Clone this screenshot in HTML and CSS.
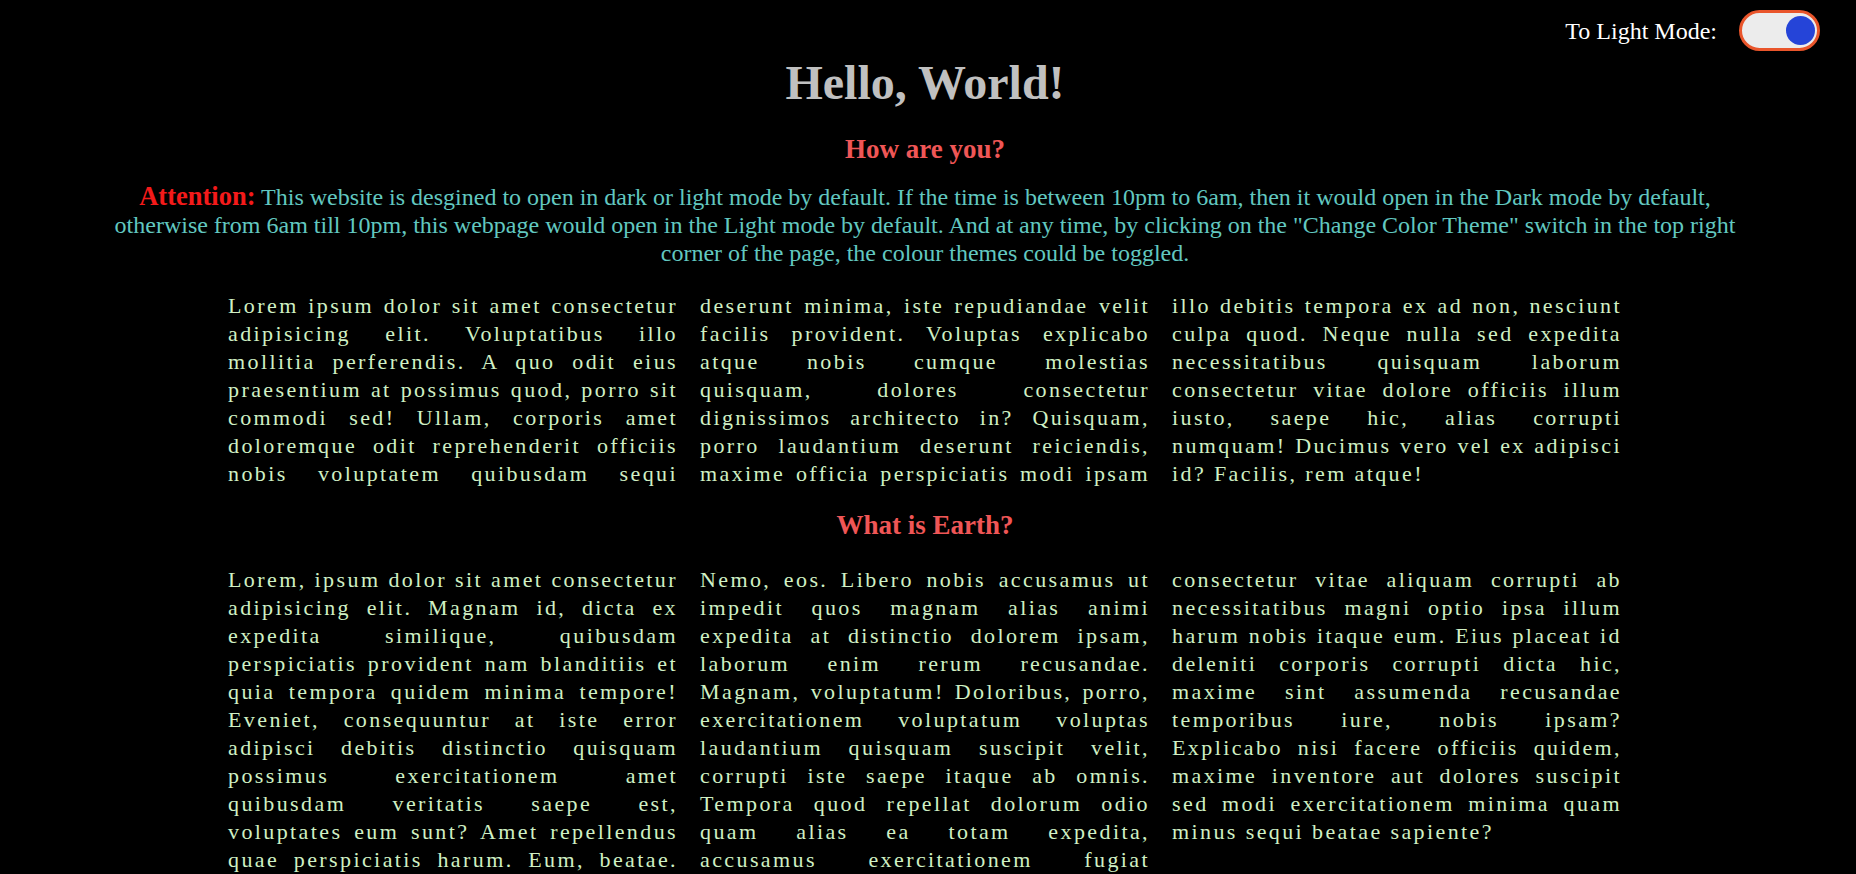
FILE: index.html
```html
<!DOCTYPE html>
<html lang="en">
<head>
<meta charset="utf-8">
<title>Hello, World!</title>
<link rel="stylesheet" href="styles.css">
</head>
<body>
<div class="page">
  <header class="topbar">
    <span class="toggle-label">To Light Mode:</span>
    <span class="switch" role="switch" aria-checked="true"><span class="knob"></span></span>
  </header>
  <h1 class="title">Hello, World!</h1>
  <h2 class="heading">How are you?</h2>
  <p class="notice"><span class="attn">Attention:</span> This website is desgined to open in dark or light mode by default. If the time is between 10pm to 6am, then it would open in the Dark mode by default, otherwise from 6am till 10pm, this webpage would open in the Light mode by default. And at any time, by clicking on the "Change Color Theme" switch in the top right corner of the page, the colour themes could be toggled.</p>
  <section class="cols">
    <p class="col cont">Lorem ipsum dolor sit amet consectetur adipisicing elit. Voluptatibus illo mollitia perferendis. A quo odit eius praesentium at possimus quod, porro sit commodi sed! Ullam, corporis amet doloremque odit reprehenderit officiis nobis voluptatem quibusdam sequi</p>
    <p class="col cont">deserunt minima, iste repudiandae velit facilis provident. Voluptas explicabo atque nobis cumque molestias quisquam, dolores consectetur dignissimos architecto in? Quisquam, porro laudantium deserunt reiciendis, maxime officia perspiciatis modi ipsam</p>
    <p class="col">illo debitis tempora ex ad non, nesciunt culpa quod. Neque nulla sed expedita necessitatibus quisquam laborum consectetur vitae dolore officiis illum iusto, saepe hic, alias corrupti numquam! Ducimus vero vel ex adipisci id? Facilis, rem atque!</p>
  </section>
  <h2 class="heading heading-earth">What is Earth?</h2>
  <section class="cols cols-earth">
    <p class="col cont">Lorem, ipsum dolor sit amet consectetur adipisicing elit. Magnam id, dicta ex expedita similique, quibusdam perspiciatis provident nam blanditiis et quia tempora quidem minima tempore! Eveniet, consequuntur at iste error adipisci debitis distinctio quisquam possimus exercitationem amet quibusdam veritatis saepe est, voluptates eum sunt? Amet repellendus quae perspiciatis harum. Eum, beatae.</p>
    <p class="col cont">Nemo, eos. Libero nobis accusamus ut impedit quos magnam alias animi expedita at distinctio dolorem ipsam, laborum enim rerum recusandae. Magnam, voluptatum! Doloribus, porro, exercitationem voluptatum voluptas laudantium quisquam suscipit velit, corrupti iste saepe itaque ab omnis. Tempora quod repellat dolorum odio quam alias ea totam expedita, accusamus exercitationem fugiat</p>
    <p class="col">consectetur vitae aliquam corrupti ab necessitatibus magni optio ipsa illum harum nobis itaque eum. Eius placeat id deleniti corporis corrupti dicta hic, maxime sint assumenda recusandae temporibus iure, nobis ipsam? Explicabo nisi facere officiis quidem, maxime inventore aut dolores suscipit sed modi exercitationem minima quam minus sequi beatae sapiente?</p>
  </section>
</div>
</body>
</html>
```

FILE: styles.css
```css
html, body {
  background: #000;
}

body {
  margin: 0;
  font-family: "Liberation Serif", "Times New Roman", serif;
}

.page {
  margin-right: 6px;
}

.topbar {
  display: flex;
  justify-content: flex-end;
  align-items: center;
  gap: 22px;
  padding: 10px 30px 0 0;
}

.toggle-label {
  color: #ffffff;
  font-size: 24px;
  line-height: 28px;
}

.switch {
  box-sizing: border-box;
  width: 81px;
  height: 41px;
  border: 3px solid #e9552b;
  border-radius: 21px;
  background: #ececec;
  display: flex;
  align-items: center;
  justify-content: flex-end;
  padding-right: 2px;
}

.knob {
  width: 29px;
  height: 29px;
  border-radius: 50%;
  background: #2544d8;
}

.title {
  margin: 4px 0 0;
  font-size: 48px;
  line-height: 56px;
  font-weight: bold;
  color: #c0c0c0;
  text-align: center;
}

.heading {
  margin: 22px 0 0;
  font-size: 27px;
  line-height: 32px;
  font-weight: bold;
  color: #ef5656;
  text-align: center;
}

.heading-earth {
  margin-top: 21px;
}

.notice {
  margin: 18px auto 0;
  max-width: 1650px;
  font-size: 24px;
  line-height: 28px;
  color: #62c8c0;
  text-align: center;
}

.attn {
  color: #f41a1a;
  font-weight: bold;
  font-size: 26.5px;
  line-height: 24px;
}

.cols {
  display: grid;
  grid-template-columns: repeat(3, 1fr);
  column-gap: 22px;
  width: 1394px;
  margin: 25px auto 0;
  font-size: 22px;
  line-height: 28px;
  letter-spacing: 2.4px;
  color: #d0f0c4;
  text-align: justify;
}

.cols-earth {
  margin-top: 25px;
}

.col {
  margin: 0;
}

.cont {
  text-align-last: justify;
}
```
